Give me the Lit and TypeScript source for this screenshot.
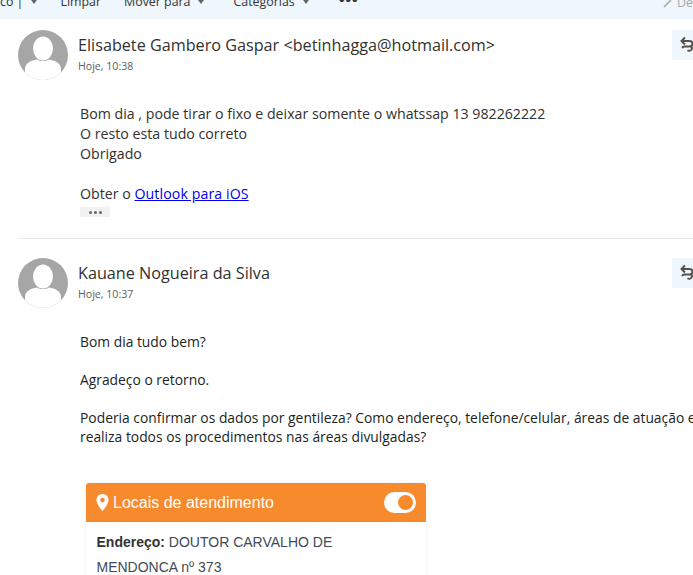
import { LitElement, html, css } from "lit";
import { customElement } from "lit/decorators.js";

const avatar = html`<svg class="avatar" viewBox="0 0 50 50" width="50" height="50" aria-hidden="true">
  <defs><clipPath id="c"><circle cx="25" cy="25" r="25"/></clipPath></defs>
  <circle cx="25" cy="25" r="25" fill="#a6a6a6"/>
  <g clip-path="url(#c)" fill="#fff">
    <ellipse cx="25" cy="18.500" rx="10" ry="12"/>
    <path d="M7 50V39c0-6 6-8.500 12-9.500 3 2 9 2 12 0 6 1 12 3.500 12 9.500v11z"/>
  </g>
</svg>`;

const reply = html`<div class="reply"><svg viewBox="0 0 16 18" width="16" height="18" fill="none" stroke="#55504e" stroke-width="2" aria-hidden="true">
  <path d="M6 1.500 2.500 5 6 8.500"/><path d="M3 5h7.500c2 0 3 1.300 3 2.700S12.500 10.500 10.500 10.500H5.500c-1.300 0-2 .8-2 1.800"/><path d="M12 10.500c1 1 1 2.500.2 3.500-.8 1-2.700 1-3.700.3"/>
</svg></div>`;

@customElement("app-root")
export class AppRoot extends LitElement {
  static styles = css`
    :host {
      display: block;
      width: 693px;
      height: 575px;
      overflow: hidden;
      background: #fff;
      font-family: "Open Sans", "Noto Sans", sans-serif;
      color: #262626;
    }
    .toolbar {
      height: 19px;
      background: #eff6fc;
      display: flex;
      align-items: flex-end;
      overflow: hidden;
      font-size: 12.4px;
      line-height: 18px;
      color: #333;
      white-space: nowrap;
    }
    .tb {
      display: flex;
      align-items: center;
      gap: 8px;
      height: 18px;
      position: relative;
      top: -8px;
    }
    .caret {
      width: 0;
      height: 0;
      border-left: 3px solid transparent;
      border-right: 3px solid transparent;
      border-top: 4px solid #666;
    }
    .tb2 { margin-left: 23px; }
    .tb3 { margin-left: 23px; }
    .tb4 { margin-left: 29px; }
    .tb5 { margin-left: 30px; font-weight: 700; letter-spacing: 0.5px; font-size: 16px; top: -11px; }
    .tb6 { margin-left: auto; color: #a6a6a6; gap: 4px; top: -7px; }
    .msg {
      position: relative;
      margin-left: 18px;
      padding-top: 11px;
    }
    .head {
      display: flex;
      gap: 10px;
      align-items: flex-start;
    }
    .avatar { flex: none; display: block; }
    .who { padding-top: 4px; }
    .name {
      font-size: 16.2px;
      line-height: 22px;
      color: #323130;
      white-space: nowrap;
    }
    .time {
      font-size: 10.600px;
      line-height: 15px;
      margin-top: 3px;
      color: #605e5c;
    }
    .reply {
      position: absolute;
      top: 11px;
      left: 654px;
      width: 30px;
      height: 30px;
      background: #eff6fc;
      display: flex;
      align-items: center;
      padding-left: 7px;
      box-sizing: border-box;
    }
    .body1 {
      margin: 24px 0 0 62px;
      font-size: 14.2px;
      line-height: 20px;
      color: #323130;
      white-space: nowrap;
    }
    .body1 a { color: #0000ee; letter-spacing: 0.08px; }
    .more {
      width: 30px;
      height: 10px;
      margin-top: 3px;
      background: #f1f1f1;
      display: flex;
      align-items: center;
      justify-content: center;
      gap: 2px;
    }
    .more i {
      width: 3px;
      height: 3px;
      border-radius: 50%;
      background: #666;
    }
    .sep {
      margin: 21px 0 0 18px;
      height: 1px;
      background: #e8e8e8;
    }
    .msg2 { padding-top: 19px; }
    .msg2 .reply { top: 19px; }
    .body2 {
      margin: 24px 0 0 62px;
      font-size: 13.85px;
      line-height: 19px;
      color: #201f1e;
      white-space: nowrap;
    }
    .body2 p { margin: 0 0 19px; }
    .card {
      width: 340px;
      margin: 37px 0 0 68px;
      background: #fff;
      font-family: "Liberation Sans", Arial, sans-serif;
      box-shadow: 0 0 3px rgba(0,0,0,.08);
    }
    .card-head {
      height: 39px;
      background: #f78a2d;
      border-radius: 3px 3px 0 0;
      display: flex;
      align-items: center;
      padding: 0 10px;
      color: #fff;
      font-size: 16px;
      gap: 4px;
    }
    .card-head span { flex: 1; }
    .toggle {
      width: 32px;
      height: 21px;
      border-radius: 11px;
      background: #fff;
      display: flex;
      align-items: center;
      justify-content: flex-end;
      padding-right: 3px;
      box-sizing: border-box;
    }
    .toggle i {
      width: 15px;
      height: 15px;
      border-radius: 50%;
      background: #f78a2d;
    }
    .card-body {
      padding: 8px 10.500px;
      font-size: 14px;
      line-height: 25px;
      color: #3f4a56;
    }
    .card-body b { color: #333; }
  `;

  render() {
    return html`
      <div class="toolbar">
        <div class="tb tb1">co |<i class="caret"></i></div>
        <div class="tb tb2">Limpar</div>
        <div class="tb tb3">Mover para<i class="caret"></i></div>
        <div class="tb tb4">Categorias<i class="caret"></i></div>
        <div class="tb tb5">•••</div>
        <div class="tb tb6"><svg width="10" height="10" viewBox="0 0 10 10" aria-hidden="true"><path d="M1 9 8 2" stroke="#a6a6a6" stroke-width="1.500"/></svg>De</div>
      </div>

      <div class="msg">
        <div class="head">
          ${avatar}
          <div class="who">
            <div class="name">Elisabete Gambero Gaspar &lt;betinhagga@hotmail.com&gt;</div>
            <div class="time">Hoje, 10:38</div>
          </div>
        </div>
        ${reply}
        <div class="body1">
          Bom dia , pode tirar o fixo e deixar somente o whatssap 13 982262222<br />
          O resto esta tudo correto<br />
          Obrigado<br /><br />
          Obter o <a href="#">Outlook para iOS</a>
          <div class="more"><i></i><i></i><i></i></div>
        </div>
      </div>
      <div class="sep"></div>

      <div class="msg msg2">
        <div class="head">
          ${avatar}
          <div class="who">
            <div class="name">Kauane Nogueira da Silva</div>
            <div class="time">Hoje, 10:37</div>
          </div>
        </div>
        ${reply}
        <div class="body2">
          <p>Bom dia tudo bem?</p>
          <p>Agradeço o retorno.</p>
          <p>Poderia confirmar os dados por gentileza? Como endereço, telefone/celular, áreas de atuação e se<br />
          realiza todos os procedimentos nas áreas divulgadas?</p>
        </div>
        <div class="card">
          <div class="card-head">
            <svg width="13" height="17" viewBox="0 0 13 17" aria-hidden="true"><path fill="#fff" fill-rule="evenodd" d="M6.500 0C3 0 .5 2.600.5 6c0 3.500 3.800 8.500 6 11 2.200-2.500 6-7.500 6-11 0-3.400-2.500-6-6-6zm0 3.800a2.300 2.300 0 1 1 0 4.600 2.300 2.300 0 0 1 0-4.600z"/></svg>
            <span>Locais de atendimento</span>
            <div class="toggle"><i></i></div>
          </div>
          <div class="card-body"><b>Endereço:</b> DOUTOR CARVALHO DE<br />MENDONCA nº 373</div>
        </div>
      </div>
    `;
  }
}
